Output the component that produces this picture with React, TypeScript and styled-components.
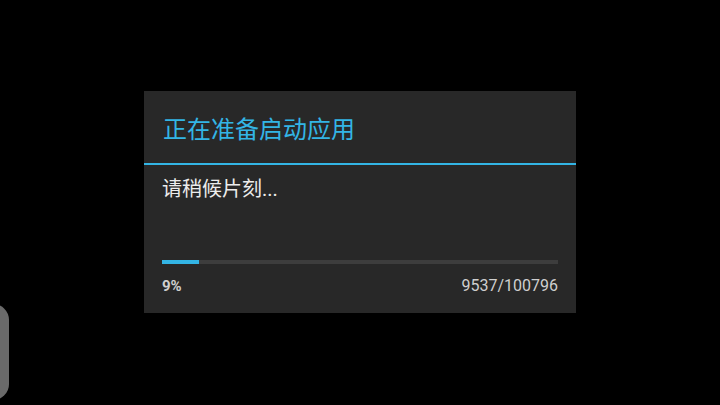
import React from "react";
import styled, { createGlobalStyle } from "styled-components";

const GlobalStyle = createGlobalStyle`
  html, body {
    margin: 0;
    padding: 0;
    background: #000;
  }
  body {
    font-family: Roboto, "Noto Sans CJK SC", "Noto Sans", sans-serif;
  }
`;

// Screen
const Screen = styled.div`
  position: relative;
  width: 720px;
  height: 405px;
  overflow: hidden;
  background: #000;
  /* Flexbox */
  display: flex;
  align-items: flex-start;
  justify-content: center;
  padding-top: 91px;
  box-sizing: border-box;
`;

// Dialog
const Dialog = styled.div`
  width: 432px;
  height: 222px;
  background: #282828;
  display: flex;
  flex-direction: column;
`;

const TitleBar = styled.div`
  height: 72px;
  display: flex;
  align-items: center;
  padding-left: 19px;
  border-bottom: 2px solid #33b5e5;
  color: #33b5e5;
  font-size: 24px;
`;

const Body = styled.div`
  flex: 1;
  display: flex;
  flex-direction: column;
  padding: 11px 18px 0 18px;
`;

const Message = styled.div`
  color: #ececec;
  font-size: 20px;
  line-height: 26px;
`;

const Track = styled.div`
  margin-top: 58px;
  height: 4px;
  background: #3d3d3d;
`;

const Fill = styled.div`
  height: 100%;
  background: #33b5e5;
`;

const Labels = styled.div`
  margin-top: 12px;
  display: flex;
  justify-content: space-between;
  align-items: baseline;
  font-size: 16px;
  line-height: 19px;
  color: #cfcfcf;
`;

const Percent = styled.span`
  font-weight: bold;
  font-size: 15px;
`;

// Edge handle peeking in from the left
const EdgeHandle = styled.div`
  position: absolute;
  left: -30px;
  top: 304px;
  width: 39px;
  height: 96px;
  border-radius: 16px;
  background: #6a6a6a;
`;

const App: React.FC = () => {
  const done = 9537;
  const total = 100796;
  const pct = (done / total) * 100;
  return (
    <>
      <GlobalStyle />
      <Screen>
        <Dialog>
          <TitleBar>正在准备启动应用</TitleBar>
          <Body>
            <Message>请稍候片刻...</Message>
            <Track>
              <Fill style={{ width: `${pct}%` }} />
            </Track>
            <Labels>
              <Percent>{Math.floor(pct)}%</Percent>
              <span>
                {done}/{total}
              </span>
            </Labels>
          </Body>
        </Dialog>
        <EdgeHandle />
      </Screen>
    </>
  );
};

export default App;
